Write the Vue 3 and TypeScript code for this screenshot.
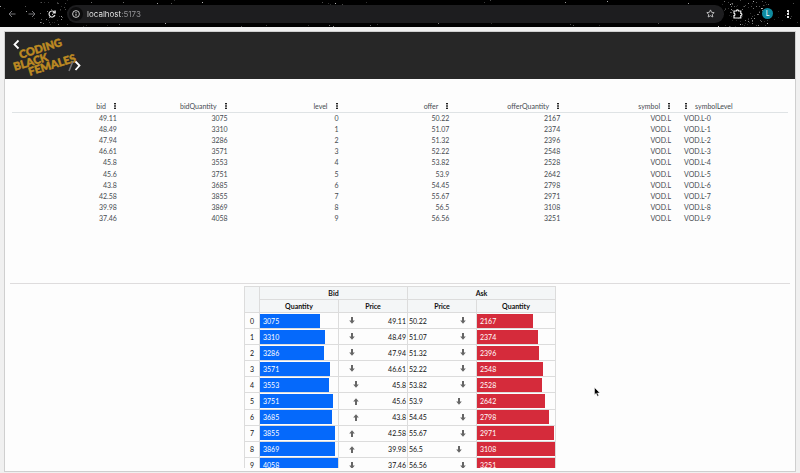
<script setup lang="ts">
import { ref } from 'vue'

interface Level {
  bid: number
  bidQuantity: number
  level: number
  offer: number
  offerQuantity: number
  symbol: string
  symbolLevel: string
}

interface Star {
  x: number
  y: number
  o: number
}

type Key = keyof Level

const columns: Key[] = ['bid', 'bidQuantity', 'level', 'offer', 'offerQuantity', 'symbol', 'symbolLevel']

// bid, bid quantity, offer, offer quantity
const book: [number, number, number, number][] = [
  [49.11, 3075, 50.22, 2167],
  [48.49, 3310, 51.07, 2374],
  [47.94, 3286, 51.32, 2396],
  [46.61, 3571, 52.22, 2548],
  [45.8, 3553, 53.82, 2528],
  [45.6, 3751, 53.9, 2642],
  [43.8, 3685, 54.45, 2798],
  [42.58, 3855, 55.67, 2971],
  [39.98, 3869, 56.5, 3108],
  [37.46, 4058, 56.56, 3251],
]

const levels = ref<Level[]>(
  book.map(([bid, bidQuantity, offer, offerQuantity], level) => ({
    bid,
    bidQuantity,
    level,
    offer,
    offerQuantity,
    symbol: 'VOD.L',
    symbolLevel: `VOD.L-${level}`,
  })),
)

const risingBids = new Set([5, 6, 7, 8])

const barWidth = (quantity: number, max: number) => `${Math.min(100, (quantity / max) * 100)}%`

const address = ref('localhost:5173')

// Seeded generator keeps the toolbar's night sky the same on every load
let seed = 17
const random = () => {
  seed = (seed * 16807) % 2147483647
  return seed / 2147483647
}
const scatter = (count: number, from: number, to: number): Star[] =>
  Array.from({ length: count }, () => ({
    x: Math.round(from + random() * (to - from)),
    y: Math.round(random() * 26),
    o: 0.15 + random() * random() * 0.7,
  }))
const stars: Star[] = [...scatter(170, 0, 800), ...scatter(30, 40, 68), ...scatter(90, 722, 768)]
</script>

<template>
  <div class="window">
    <nav class="toolbar" aria-label="Browser">
      <svg class="sky" aria-hidden="true">
        <rect v-for="(s, i) in stars" :key="i" :x="s.x" :y="s.y" width="1" height="1" fill="#fff" :opacity="s.o" />
      </svg>
      <button class="tool" aria-label="Back">
        <svg width="8" height="8" viewBox="0 0 8 8" fill="none" stroke="#77777a"><path d="M7.5 4H1M4 1 1 4l3 3" /></svg>
      </button>
      <button class="tool" aria-label="Forward">
        <svg width="8" height="8" viewBox="0 0 8 8" fill="none" stroke="#77777a"><path d="M.5 4H7M4 1l3 3-3 3" /></svg>
      </button>
      <button class="tool" aria-label="Reload">
        <svg width="8" height="8" viewBox="0 0 8 8" fill="none" stroke="#e6e6e6" stroke-width="1.2">
          <path d="M6.9 5A3 3 0 1 1 6.2 1.9L7 2.7M7.2.4v2.5H4.7" />
        </svg>
      </button>
      <div class="omnibox">
        <button class="site" aria-label="Site information">
          <svg width="8" height="8" viewBox="0 0 8 8" fill="none" stroke="#dcdcdc">
            <circle cx="4" cy="4" r="3.4" stroke-width=".9" />
            <path d="M4 3.6v2.2M4 2v.9" />
          </svg>
        </button>
        <input v-model="address" class="address" type="text" aria-label="Address" spellcheck="false" />
        <button class="tool" aria-label="Bookmark this page">
          <svg width="9" height="9" viewBox="0 0 9 9" fill="none" stroke="#c8c8ca" stroke-width=".9">
            <path d="m4.5.9 1.1 2.4 2.6.3-1.9 1.8.5 2.6-2.3-1.3L2.2 8l.5-2.6L.8 3.6l2.6-.3Z" />
          </svg>
        </button>
      </div>
      <button class="tool extensions" aria-label="Extensions">
        <svg width="10" height="10" viewBox="0 0 10 10" fill="none" stroke="#f2f2f2" stroke-width="1.2">
          <path d="M1 2h2.3a1.1 1.1 0 0 1 2.2 0h2.3v2.3a1.1 1.1 0 0 1 0 2.2V9H1V6.7a1.3 1.3 0 0 0 0-2.5Z" />
        </svg>
      </button>
      <button class="profile" aria-label="Profile">L</button>
      <button class="tool" aria-label="Browser menu">
        <svg width="2" height="8" viewBox="0 0 2 8" fill="#e6e6e6">
          <rect width="2" height="2" /><rect y="3" width="2" height="2" /><rect y="6" width="2" height="2" />
        </svg>
      </button>
    </nav>

    <div class="page">
      <header class="banner">
        <svg class="logo" width="80" height="47" viewBox="0 0 80 47" role="img" aria-label="Coding Black Females">
          <path d="M13.5 8.500 9.500 12.500l4 4" fill="none" stroke="#fff" stroke-width="1.8" />
          <g class="logo-words" transform="rotate(-17)">
            <text x="7" y="30">CODING</text>
            <text x="-2" y="40">BLACK</text>
            <text x="11" y="49">FEMALES</text>
          </g>
          <path d="m64 39 4-10" stroke="#77777a" stroke-width="1.5" />
          <path d="m70.500 29.500 4 4-4 4.500" fill="none" stroke="#fff" stroke-width="1.8" />
        </svg>
      </header>

      <main class="content">
        <section class="grid-panel">
          <table class="grid">
            <thead>
              <tr>
                <th v-for="c in columns" :key="c" scope="col">
                  <div class="heading">
                    <span>{{ c }}</span>
                    <button class="menu" :aria-label="`${c} column menu`">
                      <svg width="2" height="6" viewBox="0 0 2 6" fill="#222">
                        <rect width="2" height="1.4" /><rect y="2.3" width="2" height="1.4" /><rect y="4.6" width="2" height="1.4" />
                      </svg>
                    </button>
                  </div>
                </th>
              </tr>
            </thead>
            <tbody>
              <tr v-for="row in levels" :key="row.symbolLevel">
                <td v-for="c in columns" :key="c">{{ row[c] }}</td>
              </tr>
            </tbody>
          </table>
        </section>

        <section class="ladder-panel">
          <table class="ladder">
            <colgroup>
              <col class="col-level" /><col class="col-quantity" /><col class="col-price" /><col class="col-price" /><col class="col-quantity" />
            </colgroup>
            <thead>
              <tr>
                <th rowspan="2"></th>
                <th colspan="2" scope="colgroup">Bid</th>
                <th colspan="2" scope="colgroup">Ask</th>
              </tr>
              <tr>
                <th scope="col">Quantity</th>
                <th scope="col">Price</th>
                <th scope="col">Price</th>
                <th scope="col">Quantity</th>
              </tr>
            </thead>
            <tbody>
              <tr v-for="row in levels" :key="row.level">
                <td class="level">{{ row.level }}</td>
                <td><div class="bar bid" :style="{ width: barWidth(row.bidQuantity, 4000) }">{{ row.bidQuantity }}</div></td>
                <td>
                  <div class="price bid-price">
                    <svg class="arrow" :class="{ up: risingBids.has(row.level) }" width="6" height="7" viewBox="0 0 6 7">
                      <path d="M2 0h2v3.500h1.800L3 6.800.2 3.500H2Z" />
                    </svg>
                    <span>{{ row.bid }}</span>
                  </div>
                </td>
                <td>
                  <div class="price">
                    <span>{{ row.offer }}</span>
                    <svg class="arrow" width="6" height="7" viewBox="0 0 6 7"><path d="M2 0h2v3.500h1.800L3 6.800.2 3.500H2Z" /></svg>
                  </div>
                </td>
                <td><div class="bar ask" :style="{ width: barWidth(row.offerQuantity, 3020) }">{{ row.offerQuantity }}</div></td>
              </tr>
            </tbody>
          </table>
        </section>
      </main>
    </div>

    <svg class="pointer" width="7" height="10" viewBox="0 0 7 10" aria-hidden="true">
      <path d="M.5.5v7.300l1.700-1.500 1.200 3 1.300-.6-1.200-2.800h2.400Z" fill="#000" stroke="#fff" stroke-width=".5" />
    </svg>
  </div>
</template>

<style>
body {
  margin: 0;
  background: #f0f0f0;
}
</style>

<style scoped>
.window {
  position: relative;
  display: flex;
  flex-direction: column;
  height: 100vh;
  overflow: hidden;
  font-family: Lato, 'Open Sans', sans-serif;
  font-size: 7px;
  line-height: 9px;
}

button {
  display: flex;
  align-items: center;
  justify-content: center;
  padding: 0;
  border: 0;
  background: none;
  font: inherit;
}

.toolbar {
  position: relative;
  display: flex;
  flex: none;
  align-items: center;
  height: 27px;
  padding: 0 6px;
  background: #000;
}

.sky {
  position: absolute;
  inset: 0;
  width: 100%;
  height: 100%;
}

.toolbar > :not(.sky) {
  position: relative;
}

.tool {
  width: 12px;
  height: 12px;
  margin-right: 8px;
}

.tool:last-child {
  margin-right: 0;
}

.omnibox {
  display: flex;
  flex: 1;
  align-items: center;
  height: 18px;
  margin-left: 1px;
  padding: 0 8px 0 2px;
  border-radius: 9px;
  background: #1d1d1f;
}

.site {
  width: 14px;
  height: 14px;
  border-radius: 7px;
  background: #0c0c0d;
}

.address {
  flex: 1;
  min-width: 0;
  height: 14px;
  padding: 0 0 0 4px;
  border: 0;
  outline: 0;
  background: linear-gradient(90deg, #f2f2f2 38px, #98989b 38px);
  background-clip: text;
  color: transparent;
  font: 8px/14px Inter, sans-serif;
}

.extensions {
  margin: 0 18px 0 8px;
}

.profile {
  width: 11px;
  height: 11px;
  margin-right: 9px;
  border-radius: 50%;
  background: #0f8ba0;
  color: #fff;
}

.page {
  display: flex;
  flex: 1;
  flex-direction: column;
  min-height: 0;
  margin: 4px 4px 1px;
  border: 1px solid #cfcfcf;
  background: #fdfdfd;
}

.banner {
  flex: none;
  height: 47px;
  background: #272727;
}

.logo {
  display: block;
}

.logo-words {
  fill: #bd8a22;
  stroke: #bd8a22;
  stroke-width: 0.5;
  font-size: 11px;
  font-weight: 900;
}

.content {
  display: flex;
  flex: 1;
  flex-direction: column;
  min-height: 0;
  padding: 0 5px 3px;
}

table {
  border-spacing: 0;
  table-layout: fixed;
}

th,
td {
  padding: 0;
}

.grid-panel {
  flex: none;
  box-sizing: border-box;
  height: 205px;
  padding: 21px 2px 0;
  border-bottom: 1px solid #dedcdd;
}

.grid {
  width: 100%;
  height: 124px;
  color: #464b51;
}

.grid th {
  height: 12px;
  border-bottom: 1px solid #dfe3e5;
  font-weight: 400;
}

.grid td {
  height: 11px;
  padding-right: 6px;
  text-align: right;
}

.grid td:last-child {
  padding-left: 7px;
  text-align: left;
}

.heading {
  display: flex;
  align-items: center;
  justify-content: flex-end;
  gap: 8px;
  padding-right: 7px;
}

.grid th:last-child .heading {
  flex-direction: row-reverse;
  padding-left: 8px;
}

.ladder-panel {
  flex: 1;
  min-height: 0;
  padding-top: 2px;
  overflow: hidden;
}

.ladder {
  width: 312px;
  height: 188px;
  margin: 0 auto;
  border-collapse: collapse;
  color: #111;
}

.col-level {
  width: 15px;
}

.col-quantity {
  width: 79px;
}

.col-price {
  width: 69px;
}

.ladder th,
.ladder td {
  border: 1px solid #dcdcdc;
}

.ladder th {
  height: 12px;
  background: #f4f6f7;
  font-weight: 700;
}

.ladder td {
  height: 15px;
  line-height: 14px;
}

.level {
  text-align: center;
}

.bar {
  box-sizing: border-box;
  height: 14px;
  padding-left: 3px;
  color: #fff;
}

.bid {
  background: #0569fb;
}

.ask {
  background: #d52b3b;
}

.price {
  display: flex;
  align-items: center;
  gap: 33px;
  padding: 0 1px;
}

.bid-price {
  justify-content: flex-end;
}

.arrow {
  flex: none;
  fill: #666;
}

.up {
  transform: rotate(180deg);
}

.pointer {
  position: absolute;
  top: 387px;
  left: 594px;
}
</style>
